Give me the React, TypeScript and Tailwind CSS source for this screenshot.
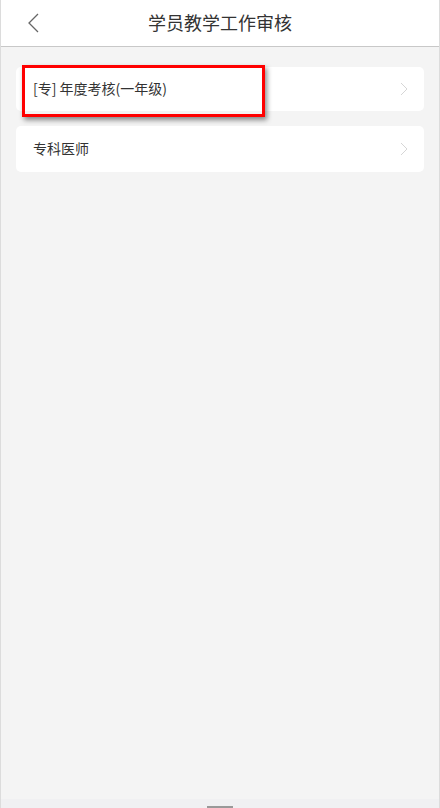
import React from 'react';

const items = ['[专] 年度考核(一年级)', '专科医师'];

function Chevron({ className }: { className?: string }) {
  return (
    <svg width="8" height="14" viewBox="0 0 8 14" className={className} fill="none">
      <path d="M1 1l6 6-6 6" stroke="currentColor" strokeWidth="1" />
    </svg>
  );
}

export default function App() {
  return (
    <div
      className="relative w-[440px] h-[808px] flex flex-col bg-[#f4f4f4] border-x border-[#dcdcdc] overflow-hidden"
      style={{ fontFamily: '"Noto Sans CJK SC", "Noto Sans", sans-serif' }}
    >
      {/* Header */}
      <div className="h-[47px] shrink-0 relative flex items-center justify-center bg-white border-b border-[#c8c8c8]">
        <button className="absolute left-[26px] top-[13px] text-[#666]">
          <svg width="12" height="20" viewBox="0 0 12 20" fill="none">
            <path d="M11 1L2 10l9 9" stroke="currentColor" strokeWidth="1.3" />
          </svg>
        </button>
        <h1 className="text-[18px] text-[#333] leading-none -mt-[2px]">学员教学工作审核</h1>
      </div>

      {/* List */}
      <div className="flex-1 flex flex-col gap-[15px] px-[15px] pt-[20px]">
        {items.map((t, i) => (
          <div
            key={t}
            className={`flex items-center justify-between bg-white rounded-[5px] pl-[17px] pr-[16px] ${i === 0 ? 'h-[44px]' : 'h-[46px]'}`}
          >
            <span className="text-[14px] text-[#333] leading-none -mt-[3px]">{t}</span>
            <Chevron className="text-[#d6d6d6]" />
          </div>
        ))}
      </div>

      {/* Bottom strip */}
      <div className="h-[9px] shrink-0 bg-[#f0f0f2] flex justify-center items-end">
        <div className="w-[26px] h-[2px] bg-[#999] mr-[1px]" />
      </div>

      {/* Red annotation box */}
      <div className="absolute left-[21px] top-[65px] w-[243px] h-[52px] border-[3px] border-[#ff0000] shadow-[2px_3px_5px_rgba(0,0,0,0.45)]" />
    </div>
  );
}
